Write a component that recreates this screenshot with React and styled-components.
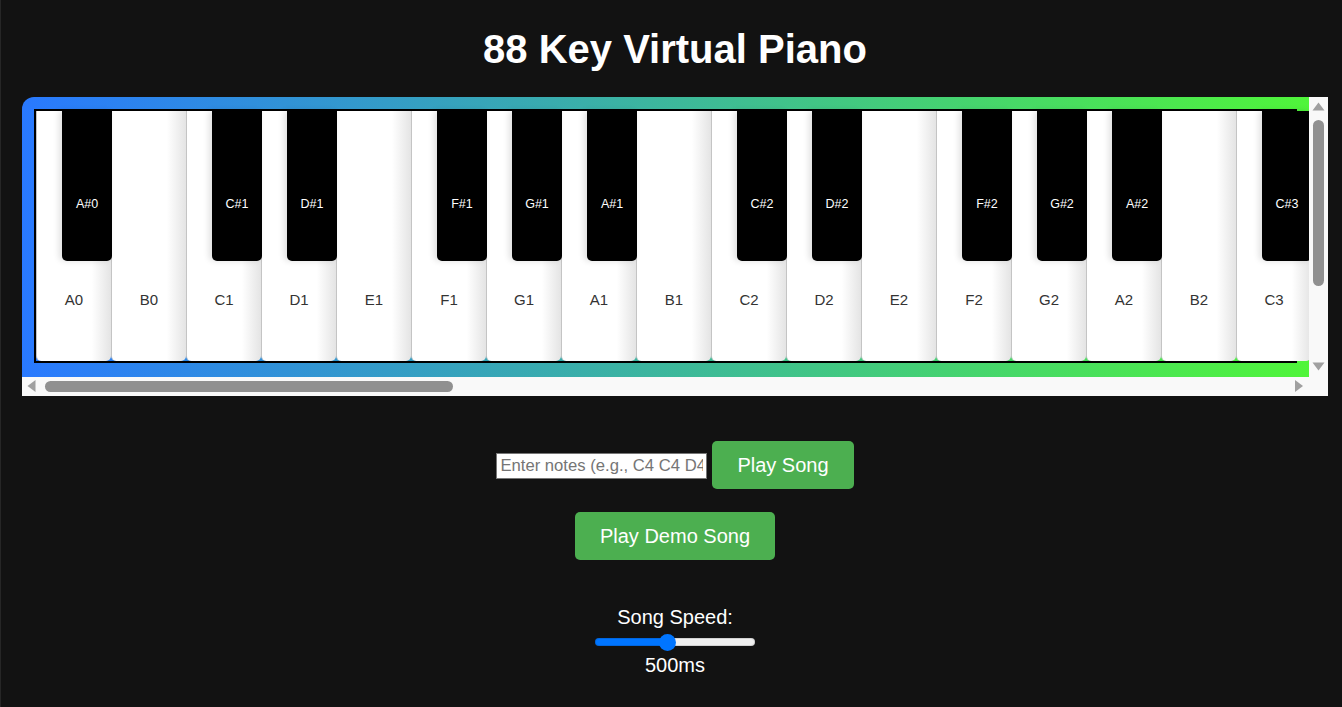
import React, { useLayoutEffect, useRef, useState } from 'react';
import styled, { createGlobalStyle } from 'styled-components';

const GlobalStyle = createGlobalStyle`
  html, body {
    margin: 0;
    padding: 0;
    background: #121212;
  }
  body {
    font-family: "Liberation Sans", Arial, sans-serif;
    color: #fff;
  }
`;

const Page = styled.div`
  min-height: 100vh;
  box-sizing: border-box;
  padding: 0 14px 24px 22px;
  display: flex;
  flex-direction: column;
  align-items: center;
  box-shadow: inset 1px 0 0 #262626;
`;

const Title = styled.h1`
  margin: 26px 0 25px;
  font-size: 40px;
  line-height: 46px;
  font-weight: 700;
  color: #fff;
  text-align: center;
`;

const BAR = '#f9f9f9';

const Frame = styled.div`
  align-self: stretch;
  display: grid;
  grid-template-columns: minmax(0, 1fr) 19px;
  grid-template-rows: 280px 19px;
  border-radius: 12px 0 0 0;
  overflow: hidden;
`;

const Viewport = styled.div`
  min-width: 0;
  box-sizing: border-box;
  padding: 12px 12px 128px 12px;
  overflow: auto;
  scrollbar-width: none;
  background: linear-gradient(90deg, #2979ff 0%, #50f53a 100%);
  &::-webkit-scrollbar {
    display: none;
  }
`;

const ScrollBar = styled.div`
  display: flex;
  flex-direction: ${(p) => (p.$vertical ? 'column' : 'row')};
  background: ${BAR};
  min-width: 0;
  min-height: 0;
`;

const Corner = styled.div`
  background: ${BAR};
`;

const ArrowButton = styled.svg`
  flex: 0 0 19px;
  width: 19px;
  height: 19px;
  display: block;
  fill: #a0a0a0;
`;

const Track = styled.div`
  flex: 1 1 auto;
  min-width: 0;
  min-height: 0;
  box-sizing: border-box;
  padding: 4px;
  display: flex;
  flex-direction: ${(p) => (p.$vertical ? 'column' : 'row')};
`;

const TrackInner = styled.div`
  flex: 1 1 auto;
  min-width: 0;
  min-height: 0;
  display: flex;
  flex-direction: ${(p) => (p.$vertical ? 'column' : 'row')};
`;

const Lead = styled.div`
  flex-shrink: 0;
`;

const Thumb = styled.div`
  flex-shrink: 0;
  background: #909090;
  border-radius: 6px;
  ${(p) => (p.$vertical ? 'width: 11px;' : 'height: 11px;')}
`;

const Keyboard = styled.div`
  display: flex;
  align-items: flex-start;
  border: 2px solid #000;
`;

const WhiteKey = styled.div`
  flex: 0 0 75px;
  box-sizing: border-box;
  height: 250px;
  display: flex;
  align-items: flex-end;
  justify-content: center;
  padding-bottom: 53px;
  background: linear-gradient(to right, #ffffff 0%, #ffffff 74%, #e4e4e4 100%);
  border-left: 1px solid #c4c4c4;
  border-radius: 0 0 5px 5px;
  color: #333;
  font-size: 15px;
  line-height: 17px;
`;

const BlackKey = styled.div`
  position: relative;
  z-index: 2;
  flex: 0 0 50px;
  box-sizing: border-box;
  height: 150px;
  margin-left: -49px;
  margin-right: -1px;
  display: flex;
  align-items: flex-end;
  justify-content: center;
  padding-bottom: 50px;
  background: #000;
  border-radius: 0 0 5px 5px;
  box-shadow: -3px 0 6px rgba(0, 0, 0, 0.12);
  color: #fff;
  font-size: 12.5px;
  line-height: 14px;
`;

const InputRow = styled.div`
  margin-top: 45px;
  display: flex;
  align-items: center;
  gap: 5px;
`;

const NotesInput = styled.input`
  box-sizing: border-box;
  width: 211px;
  height: 26px;
  margin-top: 2px;
  padding: 1px 3px;
  border: 1px solid #767676;
  border-radius: 0;
  background: #fff;
  color: #000;
  font-family: "Liberation Sans", Arial, sans-serif;
  font-size: 16.67px;
  outline: none;
  &::placeholder {
    color: #757575;
  }
`;

const GreenButton = styled.button`
  margin-top: ${(p) => p.$top || 0}px;
  padding: 12.5px 25px;
  border: none;
  border-radius: 5px;
  background: #4caf50;
  color: #fff;
  font-family: "Liberation Sans", Arial, sans-serif;
  font-size: 20px;
  line-height: 23px;
  cursor: pointer;
`;

const SpeedBlock = styled.div`
  margin-top: 46px;
  display: flex;
  flex-direction: column;
  align-items: center;
  font-size: 20px;
  line-height: 23px;
  color: #fff;
`;

const Range = styled.input`
  -webkit-appearance: none;
  appearance: none;
  width: 160px;
  height: 20px;
  margin: 3px 0 2px;
  padding: 0;
  background: transparent;
  outline: none;

  &::-webkit-slider-runnable-track {
    height: 8px;
    border-radius: 4px;
    background: linear-gradient(
      to right,
      #0075ff 0,
      #0075ff ${(p) => p.$stop}px,
      #efefef ${(p) => p.$stop}px,
      #efefef 100%
    );
    box-shadow: inset 0 0 0 1px rgba(0, 0, 0, 0.12);
  }
  &::-webkit-slider-thumb {
    -webkit-appearance: none;
    appearance: none;
    width: 17px;
    height: 17px;
    margin-top: -4.5px;
    border: none;
    border-radius: 50%;
    background: #0075ff;
  }
`;

const NAMES = ['C', 'C#', 'D', 'D#', 'E', 'F', 'F#', 'G', 'G#', 'A', 'A#', 'B'];
const KEYS = Array.from({ length: 88 }, (_, i) => {
  const midi = 21 + i;
  const name = NAMES[midi % 12];
  const octave = Math.floor(midi / 12) - 1;
  return { note: `${name}${octave}`, black: name.includes('#') };
});

function Bar({ vertical, size, offset }) {
  const dim = vertical ? 'height' : 'width';
  return (
    <ScrollBar $vertical={vertical}>
      <ArrowButton viewBox="0 0 19 19">
        {vertical ? (
          <polygon points="3.5,13.5 15.5,13.5 9.5,5.5" />
        ) : (
          <polygon points="13.5,3 13.5,15 5.5,9" />
        )}
      </ArrowButton>
      <Track $vertical={vertical}>
        <TrackInner $vertical={vertical}>
          <Lead style={{ [dim]: `${offset}%` }} />
          <Thumb $vertical={vertical} style={{ [dim]: `${size}%` }} />
        </TrackInner>
      </Track>
      <ArrowButton viewBox="0 0 19 19">
        {vertical ? (
          <polygon points="3.5,4.5 15.5,4.5 9.5,12.5" />
        ) : (
          <polygon points="5,3 5,15 13,9" />
        )}
      </ArrowButton>
    </ScrollBar>
  );
}

export default function App() {
  const [speed, setSpeed] = useState(500);
  const [notes, setNotes] = useState('');
  const viewRef = useRef(null);
  const [scroll, setScroll] = useState({ sl: 0, st: 0, sw: 3926, sh: 394, cw: 1287, ch: 280 });

  const measure = () => {
    const el = viewRef.current;
    if (!el) return;
    setScroll({
      sl: el.scrollLeft,
      st: el.scrollTop,
      sw: el.scrollWidth,
      sh: el.scrollHeight,
      cw: el.clientWidth,
      ch: el.clientHeight,
    });
  };

  useLayoutEffect(() => {
    measure();
    window.addEventListener('resize', measure);
    return () => window.removeEventListener('resize', measure);
  }, []);

  const hSize = Math.min(100, (scroll.cw / scroll.sw) * 100);
  const vSize = Math.min(100, (scroll.ch / scroll.sh) * 100);
  const hOff = scroll.sw > scroll.cw ? (scroll.sl / (scroll.sw - scroll.cw)) * (100 - hSize) : 0;
  const vOff = scroll.sh > scroll.ch ? (scroll.st / (scroll.sh - scroll.ch)) * (100 - vSize) : 0;

  const min = 100;
  const max = 1000;
  const frac = (speed - min) / (max - min);
  const stop = 8.5 + frac * (160 - 17);

  return (
    <>
      <GlobalStyle />
      <Page>
        <Title>88 Key Virtual Piano</Title>
        <Frame>
          <Viewport ref={viewRef} onScroll={measure}>
            <Keyboard>
              {KEYS.map((k) =>
                k.black ? (
                  <BlackKey key={k.note}>{k.note}</BlackKey>
                ) : (
                  <WhiteKey key={k.note}>{k.note}</WhiteKey>
                )
              )}
            </Keyboard>
          </Viewport>
          <Bar vertical size={vSize} offset={vOff} />
          <Bar size={hSize} offset={hOff} />
          <Corner />
        </Frame>
        <InputRow>
          <NotesInput
            type="text"
            value={notes}
            onChange={(e) => setNotes(e.target.value)}
            placeholder="Enter notes (e.g., C4 C4 D4 C4 F4 E4)"
          />
          <GreenButton>Play Song</GreenButton>
        </InputRow>
        <GreenButton $top={23}>Play Demo Song</GreenButton>
        <SpeedBlock>
          <label htmlFor="speed">Song Speed:</label>
          <Range
            id="speed"
            type="range"
            min={min}
            max={max}
            value={speed}
            $stop={stop}
            onChange={(e) => setSpeed(Number(e.target.value))}
          />
          <span>{speed}ms</span>
        </SpeedBlock>
      </Page>
    </>
  );
}
